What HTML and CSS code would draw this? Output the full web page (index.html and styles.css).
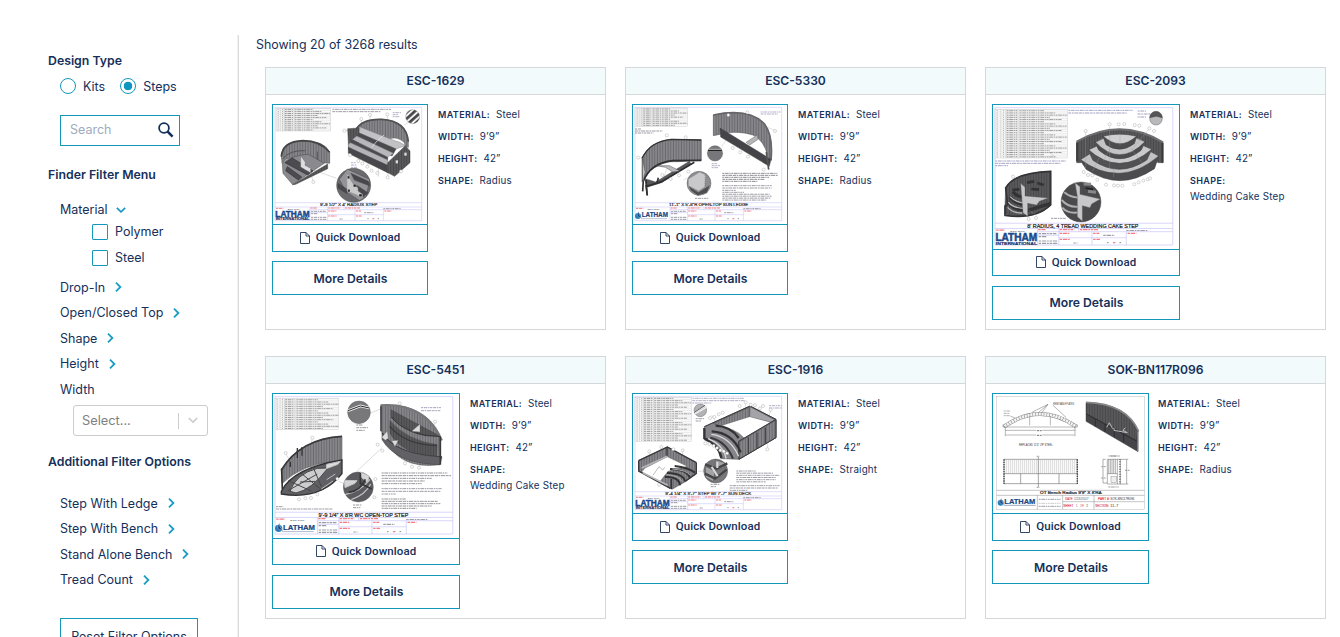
FILE: index.html
```html
<!DOCTYPE html>
<html lang="en">
<head>
<meta charset="utf-8">
<title>Step Finder</title>
<link rel="stylesheet" href="styles.css">
</head>
<body>
<svg class="defs" aria-hidden="true">
  <defs>
    <pattern id="ribs" width="8" height="20" patternUnits="userSpaceOnUse"><rect width="8" height="20" fill="#808083"/><path d="M1 0V20" stroke="#535356" stroke-width="1.6"/><path d="M5 0V20" stroke="#929295" stroke-width="2"/></pattern>
    <pattern id="dark" width="8" height="20" patternUnits="userSpaceOnUse"><rect width="8" height="20" fill="#59595c"/><path d="M1 0V20" stroke="#38383b" stroke-width="1.6"/></pattern>
    <pattern id="stripe" width="14" height="14" patternUnits="userSpaceOnUse" patternTransform="rotate(48)"><rect width="14" height="14" fill="#f2f2f2"/><rect width="8" height="14" fill="#454548"/></pattern>
  </defs>
</svg>
<div class="page">
  <aside class="sidebar">
    <h2 class="heading">Design Type</h2>
    <div class="radios">
      <label class="choice"><span class="radio"></span>Kits</label>
      <label class="choice"><span class="radio on"></span>Steps</label>
    </div>
    <div class="search"><span class="placeholder">Search</span>
      <svg width="16" height="16" viewBox="0 0 16 16" fill="none" stroke="#15305a"><circle cx="6" cy="6" r="4.9" stroke-width="1.8"/><path d="M9.4 9.4L14.6 14.6" stroke-width="2.6"/></svg>
    </div>
    <h2 class="heading finder">Finder Filter Menu</h2>
    <div class="filter material"><span>Material</span><svg class="chev-down" width="10" height="6" viewBox="0 0 10 6"><path d="M.8 .8L5 4.8L9.2 .8"/></svg></div>
    <div class="checks">
      <label class="check"><span class="box"></span><span class="label">Polymer</span></label>
      <label class="check"><span class="box"></span><span class="label">Steel</span></label>
    </div>
    <div class="filters">
      <div class="filter"><span>Drop-In</span><svg class="chev" width="7" height="10" viewBox="0 0 7 10"><path d="M1 .7L5.4 5L1 9.3"/></svg></div>
      <div class="filter"><span>Open/Closed Top</span><svg class="chev" width="7" height="10" viewBox="0 0 7 10"><path d="M1 .7L5.4 5L1 9.3"/></svg></div>
      <div class="filter"><span>Shape</span><svg class="chev" width="7" height="10" viewBox="0 0 7 10"><path d="M1 .7L5.4 5L1 9.3"/></svg></div>
      <div class="filter"><span>Height</span><svg class="chev" width="7" height="10" viewBox="0 0 7 10"><path d="M1 .7L5.4 5L1 9.3"/></svg></div>
      <div class="filter"><span>Width</span></div>
    </div>
    <div class="select"><span class="value">Select...</span><span class="bar"></span><svg width="10" height="7" viewBox="0 0 10 7"><path d="M.8 1L5 5L9.2 1" fill="none" stroke="#ccc" stroke-width="1.7"/></svg></div>
    <h2 class="heading additional">Additional Filter Options</h2>
    <div class="filters more">
      <div class="filter"><span>Step With Ledge</span><svg class="chev" width="7" height="10" viewBox="0 0 7 10"><path d="M1 .7L5.4 5L1 9.3"/></svg></div>
      <div class="filter"><span>Step With Bench</span><svg class="chev" width="7" height="10" viewBox="0 0 7 10"><path d="M1 .7L5.4 5L1 9.3"/></svg></div>
      <div class="filter"><span>Stand Alone Bench</span><svg class="chev" width="7" height="10" viewBox="0 0 7 10"><path d="M1 .7L5.4 5L1 9.3"/></svg></div>
      <div class="filter"><span>Tread Count</span><svg class="chev" width="7" height="10" viewBox="0 0 7 10"><path d="M1 .7L5.4 5L1 9.3"/></svg></div>
    </div>
    <button class="reset">Reset Filter Options</button>
  </aside>
  <main class="results">
    <p class="count">Showing 20 of 3268 results</p>
    <div class="grid" id="grid"></div>
  </main>
</div>
<script src="script.js"></script>
</body>
</html>
```
FILE: styles.css
```css
* { box-sizing: border-box; }
html, body { height: 100%; }
body { margin: 0; background: #fff; color: #15305a; font-family: Inter, Roboto, "Liberation Sans", sans-serif; font-size: 12.5px; overflow: hidden; }
.defs { position: absolute; width: 0; height: 0; }
.page { display: flex; height: 637px; overflow: hidden; padding-top: 35px; }
.sidebar { width: 239px; flex: none; padding: 17px 0 0 48px; border-right: 1px solid #d8dadb; box-shadow: inset -1px 0 #f1f2f2; height: 640px; }
.heading { margin: 0; font-size: 12.3px; font-weight: 600; line-height: 18px; }
.radios { display: flex; gap: 15px; margin: 7px 0 20px 12px; height: 18px; }
.choice, .check { display: flex; align-items: center; gap: 7px; }
.radio { width: 16px; height: 16px; border: 1px solid #1497bb; border-radius: 50%; }
.radio.on { background: radial-gradient(circle, #0c96c0 4px, transparent 4.6px); }
.search { margin-left: 12px; width: 120px; height: 31px; border: 1px solid #1497bb; display: flex; align-items: center; justify-content: space-between; padding: 0 5px 2px 9px; }
.placeholder { color: #9eabbe; }
.finder { margin-top: 20px; }
.filter { display: flex; align-items: center; gap: 10px; height: 25.5px; padding: 0 0 1px 12px; }
.chev, .chev-down { fill: none; stroke: #1c9cc2; stroke-width: 1.8; }
.material { height: 19px; margin-top: 16px; gap: 8px; padding-bottom: 0; }
.checks { padding-left: 44px; }
.check { height: 26px; }
.label { padding-bottom: 1px; }
.box { width: 16px; height: 16px; border: 1px solid #1497bb; border-radius: 1px; }
.filters { margin-top: 4px; }
.select { margin: 2.5px 0 0 25px; width: 135px; height: 31px; border: 1px solid #ccc; border-radius: 3px; display: flex; align-items: center; padding: 0 9px 0 8px; }
.value { flex: 1; color: #808080; font-size: 12.8px; }
.bar { width: 1px; height: 16px; background: #ccc; margin-right: 9px; }
.additional { margin-top: 17px; }
.more { margin-top: 20px; }
.reset { display: block; margin: 25px 0 0 12px; width: 138px; height: 36px; border: 1px solid #1497bb; background: #fff; font: inherit; color: inherit; padding: 0; white-space: nowrap; }
.results { padding: 0 0 0 17px; }
.count { margin: 0; line-height: 19px; height: 32px; font-size: 12.4px; }
.grid { display: grid; grid-template-columns: repeat(3, 341px); grid-auto-rows: 263px; gap: 26px 19px; margin-left: 9px; }
.card { border: 1px solid #d5d8da; }
.card-title { margin: 0; height: 27px; line-height: 26px; background: #f3fafc; border-bottom: 1px solid #d5d8da; text-align: center; font-size: 12.1px; font-weight: 600; }
.card-body { display: flex; align-items: flex-start; gap: 10px; padding: 9px 6px; }
.card:last-child .card-body { gap: 9px; }
.preview { border: 1px solid #1497bb; }
.drawing { display: block; }
.download { height: 27px; border-top: 1px solid #1497bb; display: flex; align-items: center; justify-content: center; gap: 6px; font-family: Roboto, sans-serif; font-size: 11.5px; letter-spacing: .1px; font-weight: 500; padding-bottom: 1px; }
.download span { padding-bottom: 1px; }
.large .download { height: 26px; }
.details { height: 34px; margin-top: 9px; border: 1px solid #1497bb; display: flex; align-items: center; justify-content: center; font-weight: 600; font-size: 12.2px; padding-left: 1px; }
.large .details { margin-top: 10px; padding-bottom: 2px; }
.specs { list-style: none; margin: 0; padding: 0; font-size: 9.8px; letter-spacing: .2px; line-height: 16px; }
.specs li { padding: 3px 0; }
.specs b { font-size: 9px; line-height: 1; font-weight: 600; letter-spacing: .4px; margin-right: 3px; }
.wrap { display: block; }
.drawing text { font-family: "Liberation Sans", sans-serif; }
```
FILE: script.js
```js
const P = (d, fill = 'none', stroke = '#414144', w = 1.4) => `<path d="${d}" fill="${fill}" stroke="${stroke}" stroke-width="${w}"/>`;
const C = (x, y, r, fill, stroke = '#555') => `<circle cx="${x}" cy="${y}" r="${r}" fill="${fill}" stroke="${stroke}" stroke-width="1.2"/>`;
const T = (x, y, w, size, str, extra = '') => `<text x="${x}" y="${y}" textLength="${w}" lengthAdjust="spacingAndGlyphs" font-size="${size}" ${extra}>${str}</text>`;
const bubbles = (pts) => pts.map(([x, y]) => C(x, y, 4.6, '#fff', '#999')).join('');

// Rows of fine print, drawn as broken strokes
function notes(x, y, widths, step = 7, color = '#7c7c88') {
  return widths.map((w, i) => P(`M${x} ${y + i * step}h${w}`, 'none', color, 3).replace('/>', ` opacity=".75" stroke-dasharray="${i % 2 ? '9 2 5 2 12 2' : '6 2 11 2 4 2'}"/>`)).join('');
}

function partsTable(x, y, w, h, rows) {
  const step = h / rows;
  let s = `<rect x="${x}" y="${y}" width="${w}" height="${h}" fill="#fafafa" stroke="#b5b5b5"/>`;
  for (let i = 0; i < rows; i++) {
    const cy = y + step * (i + .5);
    s += P(`M${x} ${y + i * step}h${w}`, 'none', '#d2d2d2', 1);
    s += P(`M${x + 5} ${cy}h3M${x + w * .11} ${cy}h3`, 'none', '#888', 2);
    s += notes(x + w * .16, cy, [w * .15], 7, '#777') + notes(x + w * .34, cy, [w * (.34 + (i * 7 % 5) * .08)], 7, '#808080');
  }
  return s + P(`M${x + w * .08} ${y}v${h}M${x + w * .15} ${y}v${h}M${x + w * .33} ${y}v${h}`, 'none', '#aaa', 1);
}

const swoosh = (x, y) => `<circle cx="${x}" cy="${y}" r="9" fill="#237ebb"/>` + P(`M${x + 3} ${y - 14}Q${x - 12} ${y + 4} ${x + 12} ${y + 5}Q${x} ${y - 2} ${x + 3} ${y - 14}Z`, '#16417f', '#fff', 1);

function sheet(x, y, s, title, tx, tw, intl, part) {
  const l = '#b9b5f5';
  let o = `<g transform="translate(${x} ${y}) scale(${s})">`;
  o += P('M0 0H440V340H0ZM0 286H440M0 299H440M105 307H440M105 299V340M158 299V340M158 322H325M207 299V307M240 307V340M325 307V340M105 316H158', 'none', l, 1.3);
  o += T(tx, 297, tw, 12.5, title, 'fill="#222" stroke="#222" stroke-width=".5"');
  o += T(38, 308, 35, 6, part, 'fill="#444"');
  o += notes(3, 303, [22], 7, '#f0505a') + notes(107, 302, [18], 7, '#f0505a') + notes(160, 302, [36], 7, '#f0505a') + notes(210, 302, [45], 7, '#f0505a');
  o += notes(160, 311, [24], 7, '#f0505a') + notes(160, 326, [26], 7, '#f0505a') + notes(243, 311, [15], 7, '#f0505a') + notes(243, 326, [17], 7, '#f0505a') + notes(328, 311, [22], 7, '#f0505a');
  o += notes(325, 304, [52]) + notes(108, 312, [44]) + notes(108, 319, [20]) + notes(108, 330, [46], 6) + notes(108, 336, [46]) + notes(268, 316, [28]) + notes(194, 335, [10]) + notes(277, 334, [4]) + notes(292, 334, [8], 7, '#f0505a') + notes(308, 334, [4]);
  if (intl) {
    o += T(1, 329, 103, 26, 'LATHAM', 'font-weight="bold" fill="#1b4a8d" stroke="#1b4a8d" stroke-width="1.4"');
    o += T(2, 339, 102, 10, 'INTERNATIONAL', 'font-weight="bold" fill="#1c2f66" stroke="#1c2f66" stroke-width=".4"');
  } else {
    o += swoosh(9, 326) + T(20, 330, 79, 20, 'LATHAM', 'font-weight="bold" fill="#1b4580" stroke="#1b4580" stroke-width=".6"') + P('M18 334H96', 'none', '#7a8db0', 1.5);
  }
  return o + '</g>';
}

const art = {
  radius: () => sheet(30, 22, 1, '9\'-9 1/2" X 4\' RADIUS STEP', 135, 172, true, 'ESC-1629') + partsTable(33, 25, 164, 68, 11) + notes(202, 28, [176, 145])
    + notes(383, 38, [25, 18, 22], 6, '#9a9ab8') + notes(258, 188, [14, 18, 18, 16], 7, '#9a9ab8')
    + P('M315 50V75M289 60V80M367 47V65M240 92L258 88M418 75L432 66M255 160V140M145 243L138 225M137 207L215 235M280 190L292 145M307 200L318 155M340 230V180M369 228V190', 'none', '#999', 1)
    + P('M272 90Q290 56 350 58Q425 62 430 125V142Q405 134 383 122Q350 108 285 81Z', 'url(#ribs)')
    + P('M374 117Q396 108 418 128L420 138L398 132Z', '#fff', '#666')
    + P('M272 90Q290 56 350 58Q425 62 430 125', 'none', '#515154', 5)
    + P('M248 86L283 84V128L251 150Z', 'url(#dark)')
    + P('M286 82L386 121Q402 124 421 137L393 147L283 99Z', '#c2c2c6', '#888') + P('M283 99L393 147L381 168L271 113Z', '#4a4a4e')
    + P('M275 108L385 160L368 172L262 119Z', '#b8b8bc', '#888') + P('M262 119L368 172V182L256 130Z', '#4c4c50')
    + P('M256 128L368 180V196L250 142V134Z', '#b4b4b8', '#888') + P('M250 142L368 196V218L250 160Z', '#48484c')
    + P('M368 188L421 137L435 153V188L389 229L366 217Z', 'url(#dark)') + P('M338 122L357 105M320 142L337 122', 'none', '#eee', 2)
    + `<rect x="392" y="181" width="7" height="9" fill="#ddd"/><rect x="418" y="158" width="7" height="9" fill="#ddd"/>`
    + P('M49 165Q52 124 114 122Q180 122 194 157V190L155 187Q125 160 64 178L51 190Z', 'url(#ribs)') + P('M49 170Q52 124 114 122Q165 122 194 157', 'none', '#444', 5)
    + P('M157 155V186M53 176Q75 150 120 152', 'none', '#555', 3)
    + P('M52 190Q83 165 130 163L178 190L83 254L54 220Z', '#8a8a8e') + P('M60 188L128 225L144 213L82 174ZM67 200L110 231L100 240L62 212Z', '#4c4c50', '#353538', 2)
    + P('M83 254L188 192V206L92 253Z', 'url(#dark)') + P('M107 167L121 187L120 196L137 205V218L122 210L107 201Z', '#dedee0', '#555', 1)
    + C(443, 50, 21, 'url(#stripe)', '#777') + C(266, 256, 51, '#6b6b6f', '#333')
    + P('M223 238L247 207L314 238L304 289L284 302L243 275Z', '#949498') + P('M258 220L310 244L315 258L268 240Z M274 255L309 278L296 291L269 273Z M219 250L246 267V281L218 264Z', '#48484c', '#48484c')
    + P('M245 219L259 243L268 257L279 263V273L292 283V292L246 273Z', '#c9c9cc', '#888') + P('M247 228h7v8h-7zM265 253h8v8h-8zM282 282h9v8h-9zM248 268h7v8h-7z', '#222', '#eee', 1)
    + bubbles([[315, 45], [289, 57], [367, 43], [238, 92], [255, 165], [280, 183], [292, 190], [307, 200], [320, 212], [337, 219], [368, 232], [145, 246], [408, 214]]),

  ledge: () => sheet(30, 22, 1, '11\'-1" X 5\'-6"R OPEN-TOP SUN LEDGE', 102, 238, false, 'ESC-5330') + partsTable(30, 24, 157, 55, 9)
    + notes(30, 87, [18, 83, 55], 6) + notes(407, 36, [60, 52], 6, '#9a9ab8') + notes(260, 191, [16, 25, 20], 6, '#9a9ab8') + notes(210, 295, [40])
    + notes(292, 220, [165, 166, 140, 128, 105], 6, '#66666c') + notes(292, 257, [148, 148, 40]) + notes(292, 277, [65, 142, 148, 145, 132], 5.8)
    + P('M310 95L318 52Q395 46 421 79L453 93M290 140L317 100M175 240L228 215M112 250L125 205', 'none', '#aaa', 1)
    + P('M265 45Q375 22 420 74Q444 108 438 181L428 168Q418 122 384 105Q342 92 300 100L265 107Z', 'url(#ribs)') + P('M265 45Q375 22 420 74Q445 108 438 181', 'none', '#66666a', 5)
    + P('M285 84L438 178L433 199L287 111Z', '#454549') + P('M363 127L398 104V119L374 135Z', '#b5b5b8', '#666') + P('M424 156L431 209', 'none', '#555', 5)
    + P('M51 174Q75 124 139 118L229 120V181L158 185Q113 180 65 220L51 245Z', 'url(#ribs)') + P('M51 175Q75 124 139 118L229 120', 'none', '#333336', 4)
    + P('M60 236L92 246L193 184L198 192L109 248L65 262Z', '#59595c') + P('M54 246Q77 188 143 182L229 181M55 240L53 274M63 240L66 284M62 260L110 245L208 187', 'none', '#2f2f32', 5)
    + P('M94 197L133 197L165 213L143 216L122 202Z', '#bbbbbf') + P('M53 176L60 217L54 245Z', '#ddd', '#444') + P('M63 255L67 287M100 233L95 252', 'none', '#333', 5)
    + C(270, 160, 23, '#77777b') + P('M249 151H290', 'none', '#222', 4) + P('M250 148H289', 'none', '#ddd', 2)
    + C(222, 250, 36, '#8d8d91') + P('M190 237L224 216L242 224L240 260L221 273L190 257Z', '#c9c9cc', '#777', 1) + P('M190 257L220 276L257 253L246 279L218 287L197 272Z', '#4e4e51', '#aaa', 1.5) + P('M240 225V258', 'none', '#222', 1).replace('/>', ' stroke-dasharray="2 4"/>')
    + bubbles([[310, 45], [367, 37], [450, 93], [125, 106], [182, 112], [40, 173], [323, 144], [346, 157], [369, 170], [416, 209], [190, 215], [162, 226], [112, 225], [137, 237]]),

  cake: () => sheet(30, 23, 1.212, '8\' RADIUS, 4 TREAD WEDDING CAKE STEP', 80, 275, true, 'ESC-2093') + partsTable(30, 29, 217, 145, 22)
    + notes(31, 183, [212, 195, 38], 7, '#8484b0') + notes(250, 31, [193, 175], 8, '#8484b0') + notes(458, 33, [25, 38, 25], 9, '#8484b0') + notes(198, 355, [44])
    + P('M275 125Q405 50 534 127V188H520Q405 115 287 188H275Z', 'url(#dark)') + P('M275 125Q405 50 534 127', 'none', '#6e6e71', 6) + P('M276 128V184M533 128V188', 'none', '#3a3a3d', 5)
    + P('M285 180Q404 95 521 168L508 206Q405 267 304 208Z', '#c2c2c5') + P('M284 177Q405 267 521 168L508 206Q405 277 304 208Z', '#4c4c4f')
    + P('M310 150Q403 100 500 148L485 180Q403 233 324 181Z', '#c9c9cc') + P('M309 148Q403 232 500 148L485 180Q403 235 324 181Z', '#515154')
    + P('M331 127Q400 84 480 125L468 151Q403 200 341 150Z', '#c4c4c7') + P('M330 125Q403 203 480 125L468 151Q403 202 341 150Z', '#4c4c4f')
    + P('M354 109Q403 96 455 109L448 128Q405 151 363 130Z', '#cfcfd2') + P('M354 108Q405 154 455 108L448 131Q405 163 363 134Z', '#4c4c4f')
    + P('M405 105V137M355 182L374 147M322 214L343 173M386 232V205M437 144L473 190M374 80V205M493 86L440 150M302 95V205', 'none', '#99999c', 1)
    + P('M62 264Q86 218 197 214V315Q160 357 73 346L59 343Z', 'url(#dark)') + P('M62 264Q86 218 197 214V315Q150 360 60 346V318L68 313Z', 'none', '#343437', 5)
    + P('M70 305Q85 332 130 331L195 311M74 290Q92 314 127 314M84 275Q97 292 121 292', 'none', '#333336', 10) + P('M75 290Q92 308 120 309M70 306Q85 326 126 326M68 322Q84 340 112 339', 'none', '#b8b8bb', 4)
    + P('M107 250L120 262V288L190 294L163 304L155 315L128 310V349L114 338Z', '#c7c7ca', '#555', 1) + P('M126 248L148 244M157 249L176 255M139 267L162 269M82 270L103 268', 'none', '#333', 8)
    + P('M195 160L215 173M130 330L155 346', 'none', '#999', 1)
    + C(288, 306, 60, '#4a4a4d') + P('M230 300Q250 323 280 320M232 323Q251 345 291 335M238 277Q257 294 283 292', 'none', '#aeaeb2', 6)
    + P('M270 248L285 260V283L346 297L320 312L315 323L292 317V364L277 350V289Z', '#c8c8cb', '#666') + P('M296 252L318 253M309 274L333 277', 'none', '#88888b', 9) + P('M302 264L324 268', 'none', '#222', 5)
    + C(513, 56, 19, '#b9b9bc') + P('M494 53A19 19 0 0 1 532 53L514 49Z', '#555558')
    + bubbles([[302, 93], [374, 73], [401, 73], [418, 72], [449, 75], [463, 77], [493, 85], [507, 93], [296, 216], [309, 225], [322, 226], [337, 239], [363, 254], [387, 256], [399, 257], [412, 257], [448, 253], [461, 247], [475, 242], [488, 238], [495, 235], [84, 230], [131, 357], [153, 354]]),

  weddingOpen: () => sheet(30, 26, 1.212, '9\'-9 1/4" X 8\'R WC OPEN-TOP STEP', 108, 222, false, 'ESC-5451') + partsTable(30, 32, 190, 93, 14)
    + notes(468, 59, [60, 58], 9, '#8888a8') + notes(274, 111, [18, 35, 25], 8, '#777') + notes(264, 351, [26, 22], 8, '#777') + notes(33, 356, [22, 170], 7)
    + notes(350, 255, [198, 210, 150, 130, 120], 8, '#6e6e76') + notes(350, 302, [180, 178, 42], 8) + notes(350, 333, [72, 168, 176, 150, 105], 7, '#6e6e76')
    + P('M315 76L348 62L425 150M404 49L390 100M510 105L490 150M142 152L130 205M62 198L85 230M222 280L240 288M270 255L350 180', 'none', '#999', 1)
    + P('M347 52Q475 42 525 140V230Q391 248 350 132Z', 'url(#ribs)') + P('M347 52Q475 42 531 157', 'none', '#77777a', 6) + P('M348 55V130', 'none', '#46464a', 5)
    + P('M378 65L520 142Q450 155 378 83ZM375 98Q425 157 516 170L515 208Q410 198 375 136Z', 'url(#dark)') + P('M378 86Q430 146 525 145M374 115Q423 172 516 172M352 135Q390 200 531 207', 'none', '#3a3a3d', 4)
    + P('M351 135Q390 200 531 207L525 230Q393 227 351 155Z', '#626266') + P('M350 148L367 129L370 151L361 157ZM380 158L400 157L390 176ZM440 130L465 108V132Z', '#ddd', '#555', 1) + P('M526 145V230', 'none', '#39393c', 5)
    + P('M49 246Q106 152 231 145V218Q112 225 51 287Z', 'url(#ribs)') + P('M49 246Q106 152 231 145', 'none', '#3a3a3d', 5) + P('M50 242L52 304', 'none', '#333336', 5)
    + P('M49 310Q83 240 231 216V257Q167 338 49 318Z', '#606064', '#333336', 4) + P('M75 310Q92 258 157 241L189 240Q139 306 93 315Z', '#cdcdd0', '#444', 3)
    + P('M70 278L139 309M110 257L170 306M69 308L157 258M105 282L151 280M147 244L169 296', 'none', '#48484b', 3) + P('M185 229L226 220L219 229L184 242ZM185 275L211 258M169 303L204 279', '#ddd', '#bebec2', 3)
    + P('M97 210V180M111 203V177M76 237V221', 'none', '#333', 4)
    + C(282, 73, 34, '#78787b') + P('M249 68L286 54L313 60', 'none', '#efeff0', 8) + P('M249 68L286 54L313 60', 'none', '#2b2b2e', 3)
    + C(280, 297, 45, '#5c5c60') + P('M238 277L276 278L270 286L240 299ZM286 252L312 264L308 283L289 268Z', '#d6d6d8', '#c1c1c4', 3) + P('M240 320Q287 310 315 274M259 335Q301 320 317 288', 'none', '#c1c1c4', 4) + P('M251 313Q285 310 301 274M286 254V286L320 303', 'none', '#353538', 5)
    + bubbles([[404, 46], [510, 101], [338, 170], [352, 188], [420, 226], [441, 236], [462, 239], [62, 195], [142, 149], [217, 272], [102, 334], [121, 331], [138, 330], [157, 319], [328, 328], [331, 273]]),

  sunDeck: () => sheet(30, 25, 1, '9\'-4 1/4" X 8\'-7" STEP W/ 7\'-7" SUN DECK', 91, 258, true, 'ESC-1916') + partsTable(30, 28, 169, 132, 20)
    + notes(202, 31, [155, 157, 57], 7, '#9696b2') + notes(432, 53, [38, 38], 7, '#9696b2') + notes(212, 92, [25, 18], 7) + notes(257, 289, [28, 16], 7)
    + notes(334, 249, [58, 110, 130, 118, 118, 88], 6.5) + notes(314, 293, [150, 145, 55], 7)
    + P('M260 82L275 105M361 48V72M405 58V72M437 68L430 90M73 192V215M109 180V203M145 186V209M173 188V212M220 250L238 249M428 183V160M300 192L317 155', 'none', '#999', 1)
    + P('M238 116L375 54L453 94V149L342 214L288 212Q279 169 239 154Z', '#85858a')
    + P('M265 106L374 57V88L300 119L285 115Z', 'url(#ribs)') + P('M375 56L449 95L443 104L374 88Z', '#a4a4a8')
    + P('M276 117L374 86L437 103L358 150Q330 118 276 117Z', '#fff', '#555', 1) + P('M342 162L453 96V149L342 214Z', 'url(#ribs)')
    + P('M238 116L375 54L453 94V149L342 214L341 160L453 94', 'none', '#39393c', 3)
    + P('M238 120V151L253 158M260 130Q323 134 347 193M272 113Q319 116 341 150M239 153Q282 170 289 210', 'none', '#333336', 7) + P('M259 139Q315 146 341 205M249 152Q296 171 303 212', 'none', '#d8d8da', 4) + P('M256 149Q303 160 324 212', 'none', '#39393c', 6) + P('M370 148V196M396 134V181M421 119V166', 'none', '#39393c', 3)
    + P('M41 217L127 177L214 224V258L181 281L141 304L42 250Z', 'url(#ribs)') + P('M60 240L127 206L187 235L129 250L104 282L50 252Z', '#fff', '#666', 1.5) + P('M41 218L127 177L214 224M126 179V205M41 218V249L136 301M214 224V256L181 280', 'none', '#39393c', 4)
    + P('M50 240L127 205M53 254L128 292', 'none', '#b6b6b9', 5) + P('M149 234Q190 239 210 254M135 243Q188 245 194 269M126 255Q177 257 180 280M119 266Q164 267 165 292', 'none', '#333336', 6) + P('M142 243Q187 247 194 261M126 260Q164 263 171 281', 'none', '#aaa', 3) + P('M139 273V303', 'none', '#333336', 5)
    + P('M84 262L102 236L113 246L119 238', 'none', '#777', 1.5)
    + C(226, 67, 19, '#b2b2b5') + P('M209 73L242 53M210 78L244 58', 'none', '#eee', 4) + P('M208 73L240 52', 'none', '#5a5a5d', 3)
    + C(272, 249, 36, '#77777b') + P('M241 235L270 249L265 281L242 268ZM271 215L299 224V238L271 248Z', '#a3a3a7') + P('M240 229L275 242L307 226M240 257L270 272L305 245', 'none', '#444447', 7) + P('M260 236L278 265M277 222V240', 'none', '#d9d9da', 6)
    + bubbles([[362, 43], [344, 54], [377, 50], [390, 52], [405, 61], [414, 54], [437, 65], [255, 90], [268, 87], [281, 79], [293, 74], [241, 166], [253, 168], [266, 173], [276, 180], [286, 187], [296, 190], [306, 196], [427, 184], [73, 190], [109, 177], [145, 184], [173, 187], [102, 290]]),

  bench: () => {
    let ribs = '';
    for (let x = 64; x < 276; x += 6) ribs += `M${x} 214v43`;
    return `<rect x="35" y="25" width="443" height="339" fill="#fff" stroke="#999"/>`
      + P('M35 307H478M35 322H478M157 322V364M233 322V364M327 322V364M233 341H478', 'none', '#777', 1.3)
      + T(165, 319, 185, 12, 'OT Bench Radius 9\'9" X 8\'RA', 'fill="#222" stroke="#222" stroke-width=".6"')
      + swoosh(47, 344) + T(58, 347, 93, 21, 'LATHAM', 'font-weight="bold" fill="#1b4580" stroke="#1b4580" stroke-width=".6"') + P('M56 352H152', 'none', '#6a7da5', 2)
      + T(241, 335, 22, 9, 'DATE', 'fill="#e0404b" stroke="#e0404b" stroke-width=".3"') + T(267, 335, 44, 9, '1/13/2017', 'fill="#555"') + T(339, 335, 35, 9, 'PART #:', 'fill="#e0404b" stroke="#e0404b" stroke-width=".3"') + T(376, 335, 72, 9, 'SOK-BN117R096', 'fill="#333"')
      + T(235, 356, 30, 9, 'SHEET', 'fill="#e0404b" stroke="#e0404b" stroke-width=".3"') + T(273, 356, 4, 9, '1', 'fill="#444"') + T(285, 356, 12, 9, 'OF', 'fill="#e0404b"') + T(304, 356, 5, 9, '2', 'fill="#444"') + T(331, 356, 41, 9, 'SECTION:', 'fill="#e0404b" stroke="#e0404b" stroke-width=".3"') + T(375, 356, 25, 9, '11-7', 'fill="#444"')
      + notes(161, 334, [66]) + notes(161, 346, [66], 7, '#bbb') + notes(161, 355, [66])
      + T(205, 50, 62, 9, 'REMOVABLE PLATES', 'fill="#333"') + T(102, 173, 101, 9, 'REPLACED 11\'6" OP STEEL', 'fill="#333"') + notes(56, 69, [20, 19, 18], 7, '#999')
      + P('M57 116Q165 40 274 116', 'none', '#888', 12) + P('M57 116Q165 40 274 116', 'none', '#f3f3f3', 9) + P('M57 116Q165 40 274 116', 'none', '#777', 9).replace('/>', ' stroke-dasharray="1.5 7"/>')
      + P('M54 110V117H277V110M134 84V112M196 84V112M61 118V145M270 118V145M60 127H271M62 141H269M160 74L189 49L170 75M189 49L142 72M203 51L243 88M76 84L90 90', 'none', '#707073', 1.5)
      + `<rect x="154" y="122" width="18" height="9" fill="#fff"/><rect x="154" y="137" width="18" height="9" fill="#fff"/>` + notes(156, 128, [14], 7, '#444') + notes(156, 142, [14], 7, '#444')
      + P('M303 43Q427 46 459 130V191L303 100Z', '#454549') + P('M305 45Q425 49 458 132L453 156L305 77Z', 'url(#dark)') + P('M303 43Q425 47 461 130', 'none', '#88888b', 5) + P('M304 78L456 160M331 93V116M360 108V132M388 125V147M416 138V163', 'none', '#222', 2) + P('M365 118L373 104L382 121L390 124M386 127L427 134L414 127L421 119', 'none', '#bcbcc0', 3) + P('M458 131V190', 'none', '#77777b', 4)
      + P('M57 214H277V287H57ZM57 257H277M107 257V287M160 207V297M222 257V287', 'none', '#59595c', 1.6) + P(ribs, 'none', '#a5a5a8', 1.3) + P('M57 214V290M277 214V290', 'none', '#444', 4).replace('/>', ' stroke-dasharray="4 3"/>')
      + notes(155, 205, [9]) + notes(155, 298, [9])
      + P('M367 214H397V288H367ZM367 257H397M371 214V257M376 214V257M381 214V257M386 214V257M391 214V257M406 214V289M396 214H430M396 288H430M362 214H354V285H366M425 215V288M370 204H405', 'none', '#6a6a6d', 1.6)
      + `<rect x="378" y="266" width="16" height="17" fill="#eee" stroke="#666"/>` + P('M405 214V289', 'none', '#777', 6).replace('/>', ' stroke-dasharray="2 3"/>') + notes(349, 236, [13]) + notes(349, 270, [13]) + notes(420, 247, [14]) + notes(377, 204, [16]) + notes(370, 297, [31]);
  }
};

const cards = [
  ['ESC-1629', 'radius', 154, 119, '24 15 462 357', 'Radius'],
  ['ESC-5330', 'ledge', 154, 119, '24 15 462 357', 'Radius'],
  ['ESC-2093', 'cake', 186, 144, '24 15 558 432', 'Wedding Cake Step'],
  ['ESC-5451', 'weddingOpen', 186, 144, '24 18 558 432', 'Wedding Cake Step'],
  ['ESC-1916', 'sunDeck', 154, 119, '24 18 462 357', 'Straight'],
  ['SOK-BN117R096', 'bench', 155, 119, '24 18 465 357', 'Radius']
];

document.getElementById('grid').innerHTML = cards.map(([name, kind, w, h, box, shape]) => `
  <article class="card${w > 160 ? ' large' : ''}">
    <h3 class="card-title">${name}</h3>
    <div class="card-body">
      <div class="media">
        <div class="preview">
          <svg class="drawing" width="${w}" height="${h}" viewBox="${box}">${art[kind]()}</svg>
          <div class="download"><svg width="10" height="12" viewBox="0 0 10 12" fill="none" stroke="#334766"><path d="M.5 .5H6L9.5 4V11.5H.5ZM6 .5V4H9.5"/></svg><span>Quick Download</span></div>
        </div>
        <div class="details">More Details</div>
      </div>
      <ul class="specs">
        <li><b>MATERIAL:</b> Steel</li>
        <li><b>WIDTH:</b> 9’9”</li>
        <li><b>HEIGHT:</b> 42”</li>
        <li><b>SHAPE:</b> <span class="${w > 160 ? 'wrap' : ''}">${shape}</span></li>
      </ul>
    </div>
  </article>`).join('');
```
